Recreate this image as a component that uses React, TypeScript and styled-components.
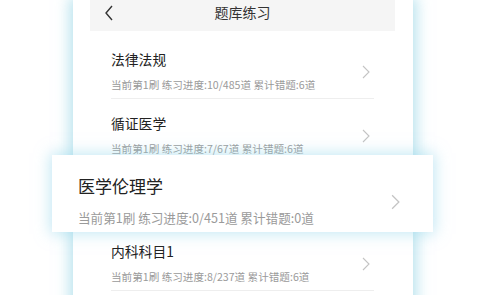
import React from "react";
import styled, { createGlobalStyle } from "styled-components";

const GlobalStyle = createGlobalStyle`
  html, body {
    margin: 0;
    padding: 0;
    background: #ffffff;
    font-family: "Noto Sans CJK SC", "Noto Sans", sans-serif;
  }
`;

const Page = styled.div`
  position: relative;
  width: 480px;
  height: 295px;
  overflow: hidden;
  background: #ffffff;
`;

const Phone = styled.div`
  width: 340px;
  height: 320px;
  margin-left: 73px;
  background: #ffffff;
  box-shadow: 0 0 14px 3px rgba(130, 205, 225, 0.6);
`;

const Header = styled.div`
  position: relative;
  height: 31px;
  margin: 0 18px 0 17px;
  background: #f5f5f5;
  display: flex;
  align-items: center;
  justify-content: center;
`;

const BackButton = styled.svg`
  position: absolute;
  left: 14px;
  top: 5px;
`;

const Title = styled.div`
  font-size: 14px;
  line-height: 20px;
  color: #333333;
  margin-top: -8px;
`;

const List = styled.div`
  padding: 4px 39px 0 38px;
`;

const Item = styled.div<{ $hidden?: boolean }>`
  display: flex;
  align-items: flex-start;
  height: 64px;
  box-sizing: border-box;
  padding-top: 14px;
  border-bottom: 1px solid #eeeeee;
  visibility: ${({ $hidden }) => ($hidden ? "hidden" : "visible")};
`;

const ItemText = styled.div`
  flex: 1;
  display: flex;
  flex-direction: column;
`;

const ItemTitle = styled.div<{ $big?: boolean }>`
  font-size: ${({ $big }) => ($big ? "17px" : "13.8px")};
  line-height: 20px;
  color: #222222;
`;

const ItemSub = styled.div<{ $big?: boolean }>`
  font-size: ${({ $big }) => ($big ? "12.6px" : "10.6px")};
  line-height: 14px;
  color: #9a9a9a;
  margin-top: ${({ $big }) => ($big ? "15px" : "8.5px")};
  white-space: nowrap;
`;

const Chevron = styled.svg<{ $shift: number }>`
  flex: none;
  margin-top: ${({ $shift }) => $shift}px;
  margin-right: 4px;
`;

const FocusCard = styled.div`
  position: absolute;
  left: 52px;
  top: 155px;
  width: 381px;
  height: 77px;
  box-sizing: border-box;
  padding: 20.5px 29px 0 26px;
  background: #ffffff;
  display: flex;
  align-items: flex-start;
  box-shadow: 0 0 14px 2px rgba(150, 215, 235, 0.55);
`;

const ChevronIcon = ({ shift, w = 8, h = 14 }: { shift: number; w?: number; h?: number }) => (
  <Chevron $shift={shift} width={w} height={h} viewBox="0 0 8 14">
    <path d="M1 1 L7 7 L1 13" fill="none" stroke="#c4c4c4" strokeWidth="1.1" />
  </Chevron>
);

const items = [
  { title: "法律法规", sub: "当前第1刷 练习进度:10/485道 累计错题:6道" },
  { title: "循证医学", sub: "当前第1刷 练习进度:7/67道 累计错题:6道" },
  { title: "医学伦理学", sub: "当前第1刷 练习进度:0/451道 累计错题:0道", focus: true },
  { title: "内科科目1", sub: "当前第1刷 练习进度:8/237道 累计错题:6道" },
];

export default function App() {
  const focused = items.find((i) => i.focus)!;
  return (
    <Page>
      <GlobalStyle />
      <Phone>
        <Header>
          <BackButton width="10" height="16" viewBox="0 0 10 16">
            <path d="M8 1 L2 8 L8 15" fill="none" stroke="#333" strokeWidth="1.4" />
          </BackButton>
          <Title>题库练习</Title>
        </Header>
        <List>
          {items.map((it) => (
            <Item key={it.title} $hidden={it.focus}>
              <ItemText>
                <ItemTitle>{it.title}</ItemTitle>
                <ItemSub>{it.sub}</ItemSub>
              </ItemText>
              <ChevronIcon shift={16} />
            </Item>
          ))}
        </List>
      </Phone>
      <FocusCard>
        <ItemText>
          <ItemTitle $big>{focused.title}</ItemTitle>
          <ItemSub $big>{focused.sub}</ItemSub>
        </ItemText>
        <ChevronIcon shift={18} w={9} h={16} />
      </FocusCard>
    </Page>
  );
}
